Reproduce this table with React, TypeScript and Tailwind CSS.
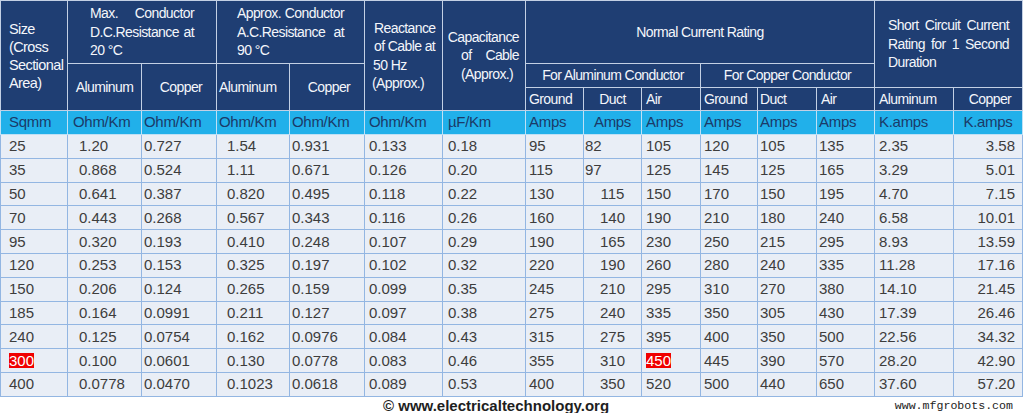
import React from "react";

type Row = string[];

const rows: Row[] = [
  ["25", "1.20", "0.727", "1.54", "0.931", "0.133", "0.18", "95", "82", "105", "120", "105", "135", "2.35", "3.58"],
  ["35", "0.868", "0.524", "1.11", "0.671", "0.126", "0.20", "115", "97", "125", "145", "125", "165", "3.29", "5.01"],
  ["50", "0.641", "0.387", "0.820", "0.495", "0.118", "0.22", "130", "115", "150", "170", "150", "195", "4.70", "7.15"],
  ["70", "0.443", "0.268", "0.567", "0.343", "0.116", "0.26", "160", "140", "190", "210", "180", "240", "6.58", "10.01"],
  ["95", "0.320", "0.193", "0.410", "0.248", "0.107", "0.29", "190", "165", "230", "250", "215", "295", "8.93", "13.59"],
  ["120", "0.253", "0.153", "0.325", "0.197", "0.102", "0.32", "220", "190", "260", "280", "240", "335", "11.28", "17.16"],
  ["150", "0.206", "0.124", "0.265", "0.159", "0.099", "0.35", "245", "210", "295", "310", "270", "380", "14.10", "21.45"],
  ["185", "0.164", "0.0991", "0.211", "0.127", "0.097", "0.38", "275", "240", "335", "350", "305", "430", "17.39", "26.46"],
  ["240", "0.125", "0.0754", "0.162", "0.0976", "0.084", "0.43", "315", "275", "395", "400", "350", "500", "22.56", "34.32"],
  ["300", "0.100", "0.0601", "0.130", "0.0778", "0.083", "0.46", "355", "310", "450", "445", "390", "570", "28.20", "42.90"],
  ["400", "0.0778", "0.0470", "0.1023", "0.0618", "0.089", "0.53", "400", "350", "520", "500", "440", "650", "37.60", "57.20"],
];

// left padding / alignment of each data column
const cellPad = [
  "pl-[8px] text-left",
  "pl-[11px] text-left",
  "pl-[2px] text-left",
  "pl-[10px] text-left",
  "pl-[2px] text-left",
  "pl-[4px] text-left",
  "pl-[5px] text-left",
  "pl-[3px] text-left",
  "text-center",
  "pl-[4px] text-left",
  "pl-[3px] text-left",
  "pl-[2px] text-left",
  "pl-[2px] text-left",
  "pl-[4px] text-left",
  "pr-[7px] text-right",
];

const units = [
  { t: "Sqmm", c: "pl-[8px] text-left" },
  { t: "Ohm/Km", c: "pl-[5px] text-left" },
  { t: "Ohm/Km", c: "pl-[2px] text-left" },
  { t: "Ohm/Km", c: "pl-[2px] text-left" },
  { t: "Ohm/Km", c: "pl-[2px] text-left" },
  { t: "Ohm/Km", c: "pl-[4px] text-left" },
  { t: "µF/Km", c: "pl-[5px] text-left" },
  { t: "Amps", c: "pl-[3px] text-left" },
  { t: "Amps", c: "text-center" },
  { t: "Amps", c: "pl-[4px] text-left" },
  { t: "Amps", c: "pl-[3px] text-left" },
  { t: "Amps", c: "pl-[2px] text-left" },
  { t: "Amps", c: "pl-[2px] text-left" },
  { t: "K.amps", c: "pl-[4px] text-left" },
  { t: "K.amps", c: "text-center" },
];

const th = "border border-[#c3d0e4] bg-[#1f3e73] font-normal text-[#f4f6fb] align-middle p-0 whitespace-nowrap";
const just = "whitespace-nowrap text-justify [text-align-last:justify]";

function Highlight({ v }: { v: string }) {
  return <span className="inline-block bg-[#f00000] text-white leading-[15px]">{v}</span>;
}

export default function App() {
  return (
    <div className="w-[1024px] h-[413px] bg-white overflow-hidden font-['Liberation_Sans',Arial,sans-serif]">
      <table className="table-fixed border-collapse w-[1022px] text-[14px] leading-[18.5px] tracking-[-0.6px]">
        <colgroup>
          <col className="w-[67px]" />
          <col className="w-[74px]" />
          <col className="w-[75px]" />
          <col className="w-[73px]" />
          <col className="w-[75px]" />
          <col className="w-[78px]" />
          <col className="w-[83px]" />
          <col className="w-[58px]" />
          <col className="w-[58px]" />
          <col className="w-[59px]" />
          <col className="w-[57px]" />
          <col className="w-[59px]" />
          <col className="w-[58px]" />
          <col className="w-[79px]" />
          <col className="w-[69px]" />
        </colgroup>
        <thead>
          <tr className="h-[63px]">
            <th rowSpan={3} className={`${th} text-left pl-[8px] text-[14.5px] leading-[18px]`}>
              <div>Size</div>
              <div>(Cross</div>
              <div>Sectional</div>
              <div>Area)</div>
            </th>
            <th colSpan={2} className={`${th} px-[22px]`}>
              <div className={just}>Max. Conductor</div>
              <div className={just}>D.C.Resistance at</div>
              <div className="text-left">20 °C</div>
            </th>
            <th colSpan={2} className={`${th} pl-[20px] pr-[20px]`}>
              <div className={just}>Approx. Conductor</div>
              <div className={just}>A.C.Resistance at</div>
              <div className="text-left">90 °C</div>
            </th>
            <th rowSpan={3} className={`${th} text-left pl-[7px] pr-[7px]`}>
              <div className="pl-[2px]">Reactance</div>
              <div className={`${just} pl-[2px]`}>of Cable at</div>
              <div className="pl-[1px]">50 Hz</div>
              <div>(Approx.)</div>
            </th>
            <th rowSpan={3} className={`${th} pr-[6px]`}>
              <div className="text-right">Capacitance</div>
              <div className={`${just} pl-[18px]`}>of Cable</div>
              <div className="text-left pl-[18px]">(Approx.)</div>
            </th>
            <th colSpan={6} className={`${th} text-center`}>
              Normal Current Rating
            </th>
            <th colSpan={2} rowSpan={2} className={`${th} px-[13px]`}>
              <div className={just}>Short Circuit Current</div>
              <div className={just}>Rating for 1 Second</div>
              <div className="text-left">Duration</div>
            </th>
          </tr>
          <tr className="h-[24px]">
            <th rowSpan={2} className={`${th} text-center`}>Aluminum</th>
            <th rowSpan={2} className={`${th} text-center pl-[4px]`}>Copper</th>
            <th rowSpan={2} className={`${th} text-left pl-[2px]`}>Aluminum</th>
            <th rowSpan={2} className={`${th} text-center pl-[4px]`}>Copper</th>
            <th colSpan={3} className={`${th} text-center`}>For Aluminum  Conductor</th>
            <th colSpan={3} className={`${th} text-center`}>For Copper Conductor</th>
          </tr>
          <tr className="h-[23px]">
            <th className={`${th} text-left pl-[3px]`}>Ground</th>
            <th className={`${th} text-center`}>Duct</th>
            <th className={`${th} text-left pl-[4px]`}>Air</th>
            <th className={`${th} text-left pl-[3px]`}>Ground</th>
            <th className={`${th} text-left pl-[2px]`}>Duct</th>
            <th className={`${th} text-left pl-[4px]`}>Air</th>
            <th className={`${th} text-left pl-[4px]`}>Aluminum</th>
            <th className={`${th} text-center pl-[4px]`}>Copper</th>
          </tr>
          <tr className="h-[24px]">
            {units.map((u, i) => (
              <th
                key={i}
                className={`border border-[#bfe0f5] bg-[#21b0ea] font-normal text-[15px] tracking-[-0.3px] text-[#1b3a68] p-0 ${u.c}`}
              >
                {u.t}
              </th>
            ))}
          </tr>
        </thead>
        <tbody>
          {rows.map((r, ri) => (
            <tr key={ri} className="h-[23.8px]">
              {r.map((v, ci) => {
                let pad = cellPad[ci];
                if (ci === 8 && ri < 2) pad = "pl-[1px] text-left";
                const red = (ri === 9 && ci === 0) || (ri === 9 && ci === 9);
                return (
                  <td
                    key={ci}
                    className={`border border-[#93b6e2] bg-[#e9eef6] text-[15px] tracking-[0px] leading-[18px] text-[#3d3d3d] p-0 ${pad}`}
                  >
                    {red ? <Highlight v={v} /> : v}
                  </td>
                );
              })}
            </tr>
          ))}
        </tbody>
      </table>
      <div className="flex items-center h-[16px] mt-px">
        <span className="ml-[383px] text-[15px] font-bold text-[#1e1e1e] leading-[16px]">
          © www.electricaltechnology.org
        </span>
        <span className="ml-auto mr-[11px] font-['Liberation_Mono','Courier_New',monospace] text-[11.6px] text-[#222] leading-[14px]">
          www.mfgrobots.com
        </span>
      </div>
    </div>
  );
}
